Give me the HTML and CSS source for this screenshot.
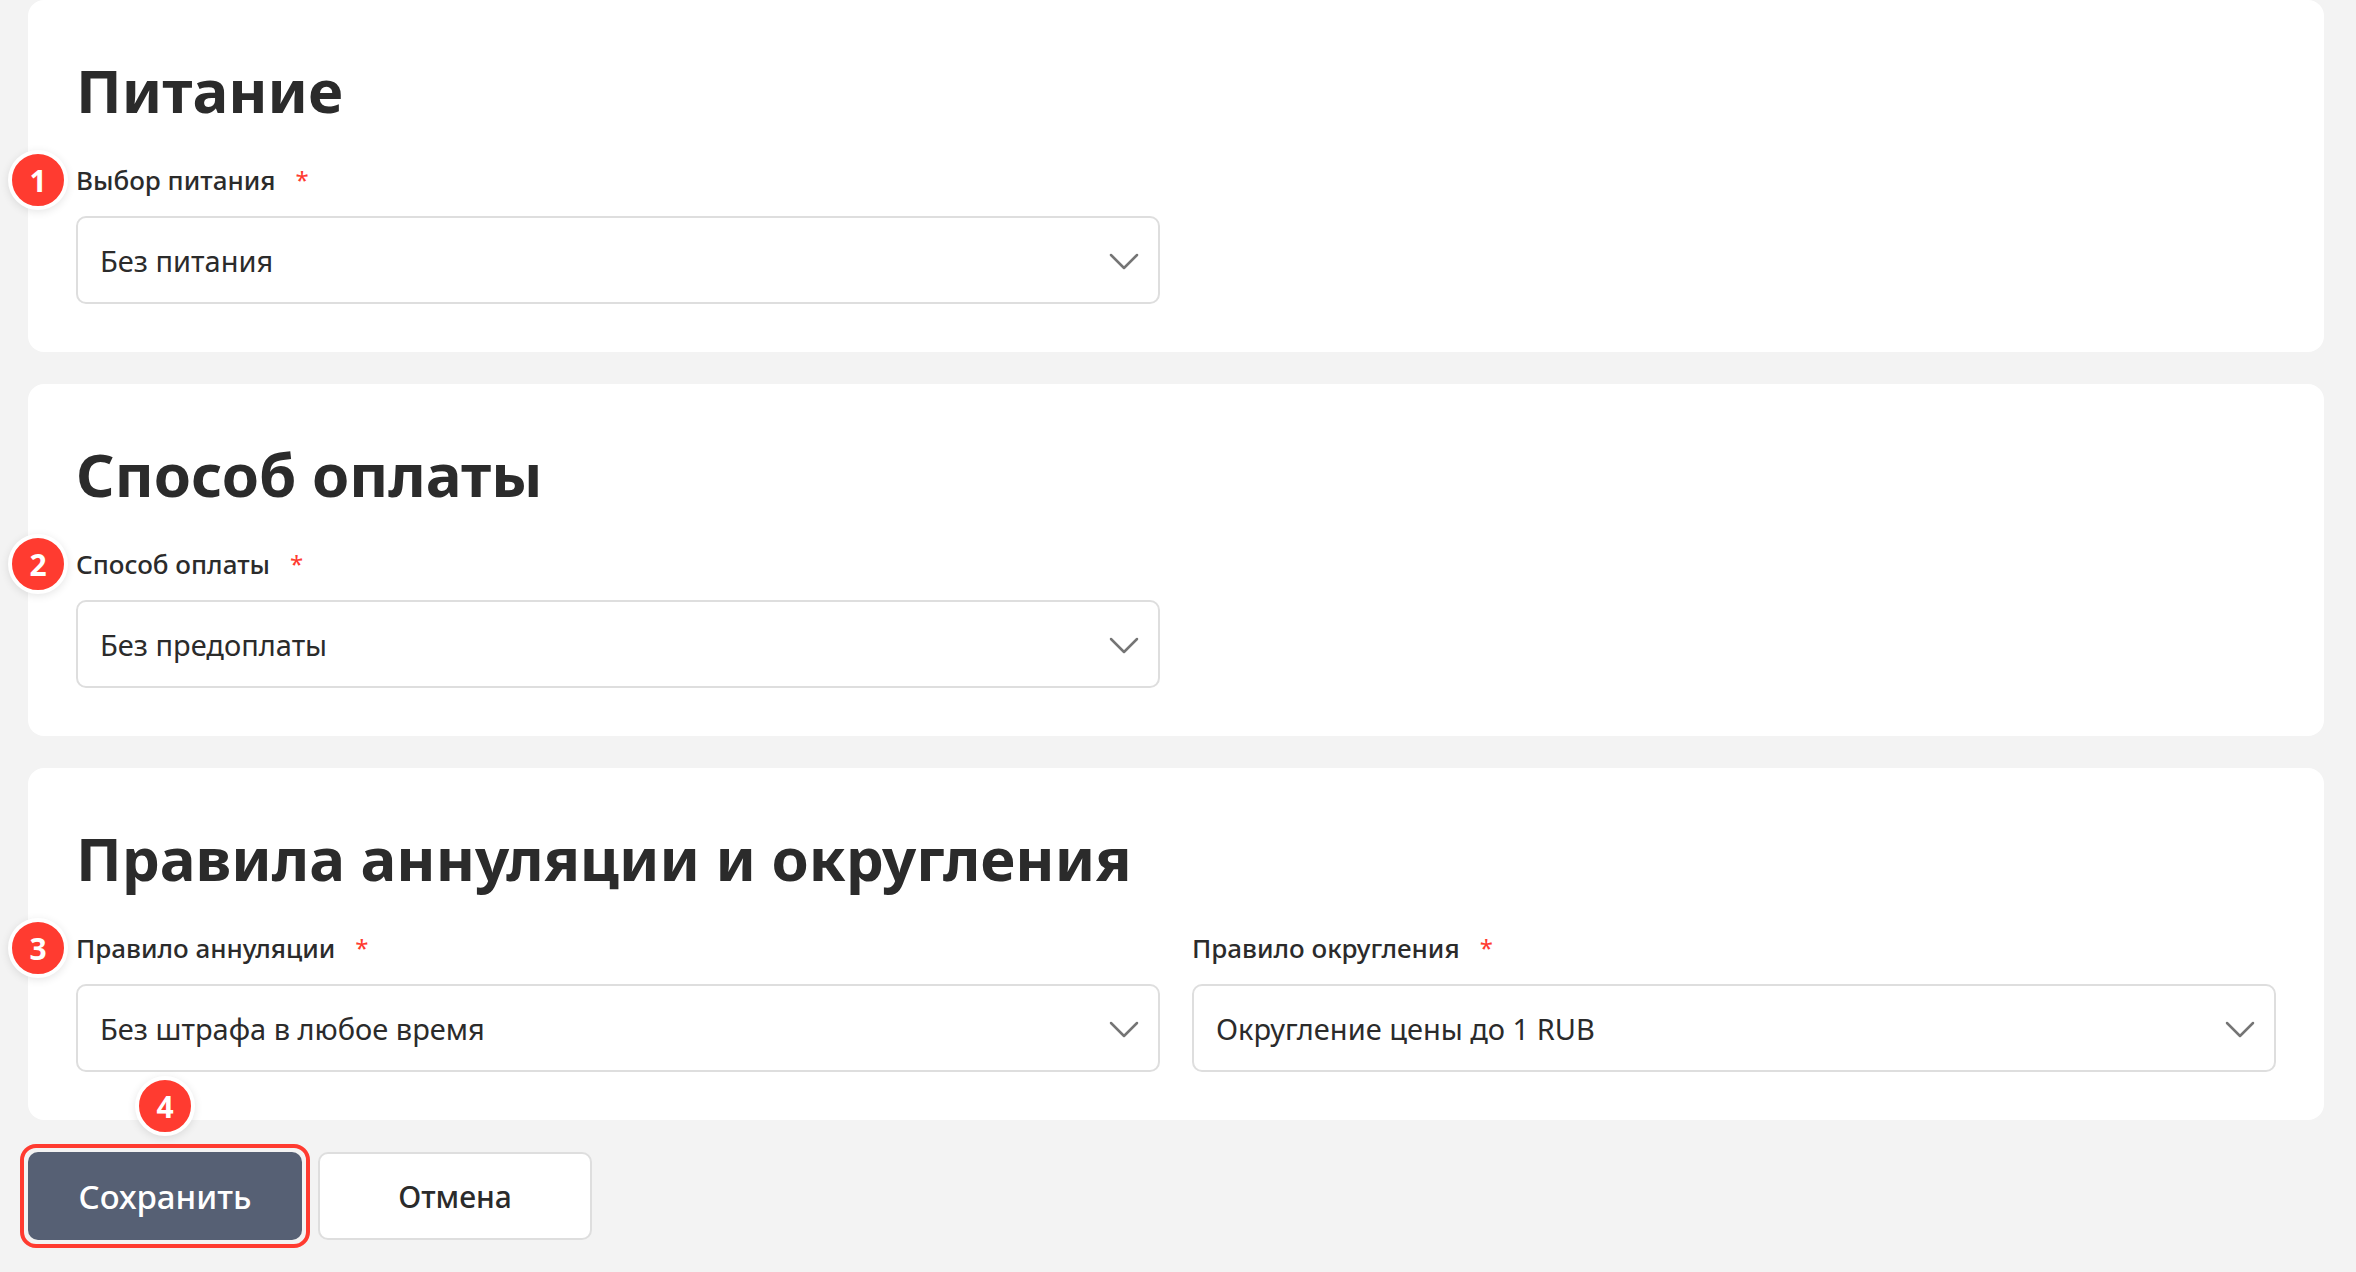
FILE: index.html
```
<!DOCTYPE html>
<html lang="ru">
<head>
    <meta charset="UTF-8">
    <meta name="viewport" content="width=device-width, initial-scale=1.0">
    <title>Тариф</title>
    <link rel="stylesheet" href="styles.css">
</head>
<body>
    <form class="page">
        <section class="card">
            <h2>Питание</h2>
            <div class="row">
                <div class="field">
                    <span class="badge badge-left">1</span>
                    <label for="meal">Выбор питания<span class="required">*</span></label>
                    <div class="select">
                        <select id="meal">
                            <option>Без питания</option>
                        </select>
                        <svg class="arrow" viewBox="0 0 30 18"><path d="M2 2l13 13L28 2"/></svg>
                    </div>
                </div>
            </div>
        </section>

        <section class="card">
            <h2>Способ оплаты</h2>
            <div class="row">
                <div class="field">
                    <span class="badge badge-left">2</span>
                    <label for="payment">Способ оплаты<span class="required">*</span></label>
                    <div class="select">
                        <select id="payment">
                            <option>Без предоплаты</option>
                        </select>
                        <svg class="arrow" viewBox="0 0 30 18"><path d="M2 2l13 13L28 2"/></svg>
                    </div>
                </div>
            </div>
        </section>

        <section class="card">
            <h2>Правила аннуляции и округления</h2>
            <div class="row">
                <div class="field">
                    <span class="badge badge-left">3</span>
                    <label for="cancellation">Правило аннуляции<span class="required">*</span></label>
                    <div class="select">
                        <select id="cancellation">
                            <option>Без штрафа в любое время</option>
                        </select>
                        <svg class="arrow" viewBox="0 0 30 18"><path d="M2 2l13 13L28 2"/></svg>
                    </div>
                </div>
                <div class="field">
                    <label for="rounding">Правило округления<span class="required">*</span></label>
                    <div class="select">
                        <select id="rounding">
                            <option>Округление цены до 1 RUB</option>
                        </select>
                        <svg class="arrow" viewBox="0 0 30 18"><path d="M2 2l13 13L28 2"/></svg>
                    </div>
                </div>
            </div>
        </section>

        <div class="actions">
            <div class="highlight">
                <span class="badge badge-top">4</span>
                <button type="submit" class="btn btn-save">Сохранить</button>
            </div>
            <button type="button" class="btn btn-cancel">Отмена</button>
        </div>
    </form>
</body>
</html>
```
FILE: styles.css
```
* {
    box-sizing: border-box;
}

body {
    margin: 0;
    background-color: #f3f3f3;
    color: #2b2b2b;
    font-family: "Noto Sans", "Open Sans", sans-serif;
}

.page {
    display: flex;
    flex-direction: column;
    gap: 32px;
    padding: 0 32px 32px 28px;
}

.card {
    padding: 48px;
    background-color: #fff;
    border-radius: 16px;
}

h2 {
    margin: 0 0 28px;
    font-size: 60px;
    line-height: 84px;
    font-weight: 700;
}

.row {
    display: grid;
    grid-template-columns: 1fr 1fr;
    gap: 32px;
}

.field {
    position: relative;
}

label {
    display: flex;
    gap: 20px;
    margin-bottom: 16px;
    font-size: 26px;
    line-height: 40px;
    font-weight: 500;
}

.required {
    color: #ff3b30;
    font-size: 24px;
    font-weight: 400;
}

.select {
    position: relative;
}

select {
    display: block;
    width: 100%;
    height: 88px;
    padding: 0 72px 0 22px;
    appearance: none;
    background-color: #fff;
    color: #2b2b2b;
    border: 2px solid #dedede;
    border-radius: 10px;
    font-family: inherit;
    font-size: 29px;
}

.arrow {
    position: absolute;
    top: 37px;
    right: 21px;
    width: 30px;
    height: 18px;
    fill: none;
    stroke: #757575;
    stroke-width: 2.5;
    stroke-linecap: round;
    stroke-linejoin: round;
    pointer-events: none;
}

.badge {
    position: absolute;
    width: 60px;
    height: 60px;
    border: 4px solid #fff;
    border-radius: 50%;
    background-color: #ff3b30;
    box-shadow: 0 2px 8px rgba(0, 0, 0, 0.1);
    color: #fff;
    font-size: 30px;
    line-height: 54px;
    font-weight: 700;
    text-align: center;
}

.badge-left {
    top: -10px;
    left: -68px;
}

.badge-top {
    bottom: 100%;
    left: 50%;
    margin: 0 0 16px -30px;
}

.actions {
    display: flex;
    gap: 16px;
}

.highlight {
    position: relative;
    border-radius: 8px;
    outline: 4px solid #ff3b30;
    outline-offset: 4px;
}

.btn {
    display: block;
    width: 274px;
    height: 88px;
    border: none;
    border-radius: 10px;
    font-family: inherit;
    font-weight: 500;
    cursor: pointer;
}

.btn-save {
    background-color: #566074;
    color: #fff;
    font-size: 33px;
}

.btn-cancel {
    background-color: #fff;
    border: 2px solid #dedede;
    color: #2b2b2b;
    font-size: 30px;
}
```
